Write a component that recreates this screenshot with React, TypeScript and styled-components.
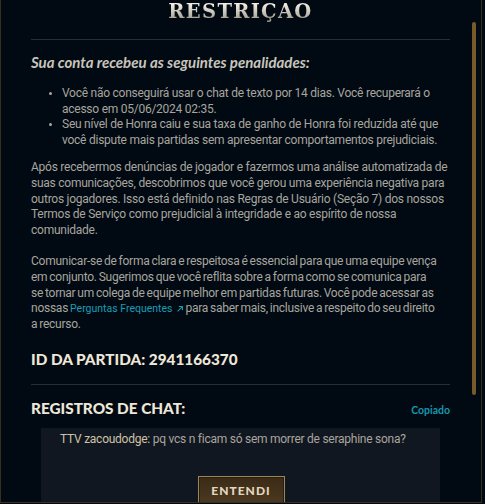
import React from 'react'
import styled, { createGlobalStyle } from 'styled-components'

const gold = '#785a28'
const sans = `Roboto, "Liberation Sans", sans-serif`
const display = `Lato, "Liberation Sans", sans-serif`

const GlobalStyle = createGlobalStyle`
  html, body {
    margin: 0;
    background: #010a13;
    overflow: hidden;
  }
  #root {
    width: 485px;
    height: 504px;
  }
`

const Frame = styled.div`
  position: relative;
  box-sizing: border-box;
  width: 482px;
  height: 503px;
  border: 1px solid #3a2f1e;
  border-top: none;
  background: #010a13;
  display: flex;
  overflow: hidden;
`

const Body = styled.div`
  flex: 1;
  min-width: 0;
  padding: 0 20px 0 30px;
  display: flex;
  flex-direction: column;
`

const Rail = styled.div`
  width: 11px;
  flex-shrink: 0;
  padding-top: 22px;
`

const Thumb = styled.div`
  width: 4px;
  height: 373px;
  margin-left: 2px;
  background: ${gold};
  border-radius: 2px;
`

const Title = styled.h1`
  margin: 0;
  padding-top: 2px;
  font-family: "DejaVu Serif", serif;
  font-weight: 700;
  font-size: 19.5px;
  line-height: 20px;
  letter-spacing: 1.3px;
  text-align: center;
  background: linear-gradient(180deg, #f2ece0 20%, #9c988e 95%);
  -webkit-background-clip: text;
  background-clip: text;
  color: transparent;
`

const Rule = styled.hr<{ gap: number }>`
  margin: ${p => p.gap}px 0 0;
  border: none;
  border-top: 1px solid #282c33;
`

const Lead = styled.h2`
  margin: 13px 0 0;
  font-family: ${display};
  font-style: italic;
  font-weight: 700;
  font-size: 15px;
  line-height: 18px;
  color: #c9c5bb;
`

const Text = `
  font-family: ${sans};
  font-size: 12px;
  line-height: 15.6px;
  letter-spacing: -0.25px;
  color: #a8a59e;
`

const List = styled.ul`
  ${Text}
  margin: 15px 0 0;
  padding: 0 0 0 31px;
  li::marker {
    font-size: 10px;
  }
`

const Paragraph = styled.p<{ gap: number; tight?: boolean }>`
  ${Text}
  margin: ${p => p.gap}px 0 0;
  word-spacing: ${p => (p.tight ? '-0.8px' : 'normal')};
`

const Link = styled.a`
  font-size: 10.5px;
  letter-spacing: 0;
  word-spacing: normal;
  color: #1a9cb3;
  text-decoration: none;
  white-space: nowrap;
  svg {
    display: inline-block;
    vertical-align: -1px;
    margin-left: 3px;
  }
`

const Heading = styled.h3`
  margin: 0;
  font-family: ${display};
  font-weight: 900;
  font-size: 15.3px;
  line-height: 20px;
  color: #eee7d8;
`

const MatchId = styled(Heading)`
  margin-top: 17px;
`

const ChatHeader = styled.div`
  margin-top: 13px;
  display: flex;
  justify-content: space-between;
  align-items: baseline;
`

const Copied = styled.span`
  font-family: ${display};
  font-weight: 700;
  font-size: 10.5px;
  color: #1596ad;
`

const ChatBox = styled.div`
  margin: 10px 10px 0;
  padding: 4px 19px;
  height: 110px;
  background: #111720;
  ${Text}
`

const Author = styled.span`
  color: #cdc3a8;
`

const Footer = styled.div`
  position: absolute;
  left: 0;
  right: 0;
  bottom: -4px;
  display: flex;
  justify-content: center;
`

const Button = styled.button`
  position: relative;
  width: 87px;
  height: 30px;
  border: 1px solid #9c8656;
  box-shadow: inset 0 0 0 1px #2a1e10;
  background: linear-gradient(180deg, #3b2a16 0%, #4c3a21 100%);
  font-family: ${display};
  font-weight: 900;
  font-size: 12px;
  letter-spacing: 1px;
  color: #e2d8bf;
  padding: 0 0 2px;
  &::before {
    content: '';
    position: absolute;
    left: -4px;
    right: -4px;
    top: 15px;
    bottom: -2px;
    border: 1px solid #6b5836;
    border-bottom: none;
    z-index: -1;
  }
`

const ArrowOut = () => (
  <svg width="8" height="8" viewBox="0 0 10 10">
    <path d="M2 8 L8 2 M3.5 2 H8 V6.5" stroke="#1a9cb3" strokeWidth="1.3" fill="none" />
  </svg>
)

export default function App() {
  return (
    <>
      <GlobalStyle />
      <Frame>
        <Body>
          <Title>RESTRIÇAO</Title>
          <Rule gap={17} />
          <Lead>Sua conta recebeu as seguintes penalidades:</Lead>
          <List>
            <li>Você não conseguirá usar o chat de texto por 14 dias. Você recuperará o acesso em 05/06/2024 02:35.</li>
            <li>Seu nível de Honra caiu e sua taxa de ganho de Honra foi reduzida até que você dispute mais partidas sem apresentar comportamentos prejudiciais.</li>
          </List>
          <Paragraph gap={12}>
            Após recebermos denúncias de jogador e fazermos uma análise automatizada de suas comunicações,
            descobrimos que você gerou uma experiência negativa para outros jogadores. Isso está definido nas
            Regras de Usuário (Seção 7) dos nossos Termos de Serviço como prejudicial à integridade e ao
            espírito de nossa comunidade.
          </Paragraph>
          <Paragraph gap={16} tight>
            Comunicar-se de forma clara e respeitosa é essencial para que uma equipe vença em conjunto.
            Sugerimos que você reflita sobre a forma como se comunica para se{'\u00a0'}tornar um colega de equipe
            melhor em partidas futuras. Você pode acessar as nossas{' '}
            <Link href="#">Perguntas Frequentes<ArrowOut /></Link> para saber mais, inclusive a respeito do
            seu direito a{'\u00a0'}recurso.
          </Paragraph>
          <MatchId>ID DA PARTIDA: 2941166370</MatchId>
          <Rule gap={15} />
          <ChatHeader>
            <Heading>REGISTROS DE CHAT:</Heading>
            <Copied>Copiado</Copied>
          </ChatHeader>
          <ChatBox>
            <Author>TTV zacoudodge:</Author> pq vcs n ficam só sem morrer de seraphine sona?
          </ChatBox>
        </Body>
        <Rail>
          <Thumb />
        </Rail>
        <Footer>
          <Button>ENTENDI</Button>
        </Footer>
      </Frame>
    </>
  )
}
